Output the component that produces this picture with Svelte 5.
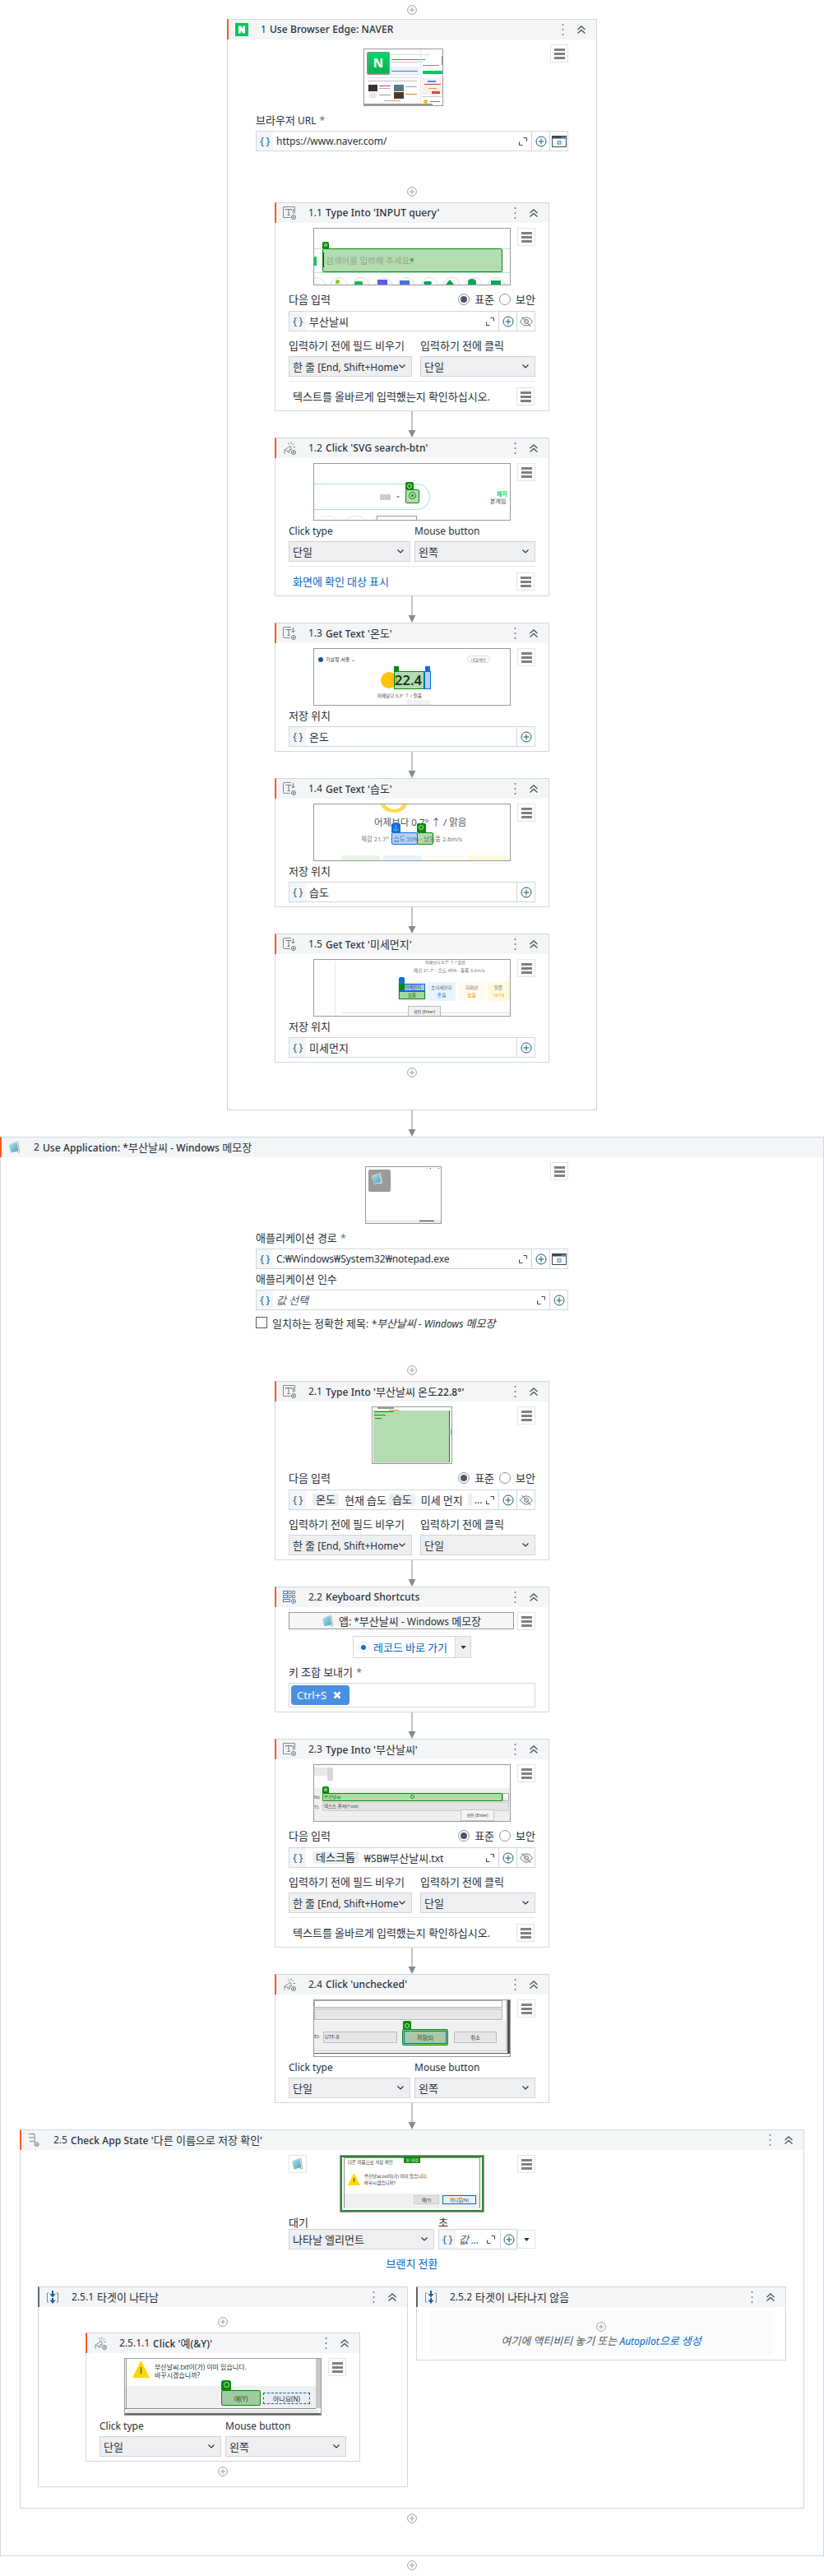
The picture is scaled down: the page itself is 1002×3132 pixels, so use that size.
<script>
  const ks = (t) => t.split(/([\uac00-\ud7a3]+)/).filter(Boolean).map((s) => ({ s, ko: /[\uac00-\ud7a3]/.test(s) }));
  const b = (x, y, w, h, o = {}) => ({ x, y, w, h, ...o });
  const st = (i) =>
    `left:${i.x}px;top:${i.y}px;width:${i.w}px;height:${i.h}px;` +
    (i.c ? `background:${i.c};` : '') +
    (i.b ? `border:${i.b};` : '') +
    (i.r ? `border-radius:${i.r};` : '') +
    (i.f ? `font-size:${i.f}px;line-height:${i.h}px;` : '') +
    (i.k ? `color:${i.k};` : '') +
    (i.wt ? `font-weight:${i.wt};` : '') +
    (i.al ? `text-align:${i.al};` : '') +
    (i.clip ? `clip-path:${i.clip};` : '');
  const G = '#0a8a0a';
  const GF = 'rgba(20,140,20,.32)';
  const BL = '#0a6fe0';
  const BF = 'rgba(20,110,230,.32)';
  const tabG = (x, y, w = 8, h = 8) => [b(x, y, w, h, { c: G, r: '2px 2px 0 0' }), b(x + w / 2 - 2, y + h / 2 - 2, 4, 4, { b: '1px solid #bff0bf', r: '50%' })];
  const lines = (x, y, n, gap, w, col = '#bbb') => Array.from({ length: n }, (_, i) => b(x, y + i * gap, w - (i % 3) * 4, 1, { c: col }));

  const tNaver = [
    ...lines(33, 6, 1, 0, 46, '#bfe8cf'),
    b(33, 12, 41, 1, { c: '#2aa86a' }), b(33, 15, 38, 1, { c: '#ccc' }),
    b(30, 21, 37, 11, { c: '#e9f1fb' }), b(33, 26, 32, 1, { c: '#5c7bb0' }),
    b(3, 3, 28, 28, { c: '#8c8c8c', r: '2px' }),
    b(5, 4, 25, 25, { c: 'linear-gradient(180deg,#03d668,#03b54f)', r: '1px' }),
    b(5, 4, 25, 25, { t: 'N', f: 15, k: '#fff', wt: 800, al: 'center' }),
    b(4, 34, 62, 1, { c: '#ddd' }), b(4, 38, 60, 1, { c: '#bbb' }),
    b(5, 43, 11, 8, { c: '#333' }), b(36, 43, 12, 8, { c: '#5a7785' }), b(36, 52, 12, 8, { c: '#4a3a2a' }), b(6, 52, 9, 7, { c: '#f0e6e6' }),
    b(18, 44, 14, 1, { c: '#e03b6f' }), b(18, 47, 14, 1, { c: '#aaa' }), b(18, 55, 14, 1, { c: '#999' }), b(50, 45, 14, 1, { c: '#999' }), b(50, 54, 14, 1, { c: '#d08a30' }),
    b(24, 62, 20, 1, { c: '#aaa' }),
    b(68, 0, 1, 66, { c: '#e8e8e8' }),
    b(71, 19, 20, 1, { c: '#888' }), b(71, 26, 24, 4, { c: '#03c75a' }),
    b(70, 35, 25, 20, { c: '#fdeef0' }), b(77, 38, 10, 2, { c: '#4a90e2' }), b(73, 42, 20, 1, { c: '#e03b3b' }), b(78, 47, 10, 1, { c: '#e5a100' }), b(82, 51, 10, 3, { c: '#e04444' }),
    b(70, 57, 24, 1, { c: '#ccc' }), b(72, 61, 5, 5, { c: '#ffc107', r: '50%' }), b(80, 63, 12, 1, { c: '#777' }),
    b(0, 66, 83, 2, { c: '#999' }), b(94, 8, 1, 11, { c: '#888' }),
  ];
  const t11 = [
    b(0, 24, 238, 1, { c: '#b5e8cc' }), b(0, 53, 238, 1, { c: '#b5e8cc' }), b(0, 34, 3, 11, { c: '#03c75a' }),
    b(10, 24, 219, 29, { c: '#b3dcb0', b: `1px solid ${G}`, r: '2px' }),
    b(11, 29, 1, 18, { c: '#333' }),
    b(14, 26, 140, 26, { t: '검색어를 입력해 주세요.', f: 10.5, k: '#8dab8b' }),
    b(117, 36, 4, 4, { b: `1px solid ${G}`, r: '50%' }),
    ...tabG(10, 16),
    ...[0, 19, 46, 74, 101, 129, 156, 183, 211].map((x, i) =>
      b(x - (i ? 0 : 8), 59, 22, 22, { b: '1px solid #dcdcdc', r: '50%' })),
    b(26, 62, 5, 5, { c: '#8dce1e', r: '50% 50% 50% 0' }), b(49, 64, 10, 4, { c: '#03b95c', r: '2px 2px 0 0' }), b(77, 62, 12, 6, { c: '#5d5ce6' }), b(104, 63, 12, 5, { c: '#4d73d9' }),
    b(133, 64, 10, 4, { c: '#03a860', r: '3px' }), b(160, 62, 10, 6, { c: '#06a04b', clip: 'polygon(50% 0,100% 100%,0 100%)' }), b(187, 61, 10, 7, { c: '#03a860', r: '50% 50% 0 0' }), b(215, 63, 12, 5, { c: '#03a860' }),
  ];
  const t12 = [
    b(-30, 24, 171, 32, { b: '1px solid #a9e6c6', r: '16px' }),
    b(80, 37, 13, 7, { c: '#ccc' }), b(100, 39, 4, 3, { c: '#999', clip: 'polygon(0 0,100% 0,50% 100%)' }),
    b(111, 22, 10, 9, { c: G, r: '2px 2px 0 0' }), b(113, 24, 6, 6, { b: '1px solid #bff0bf', r: '50%' }),
    b(111, 31, 17, 17, { c: GF, b: `1px solid ${G}`, r: '2px' }),
    b(115, 34, 9, 9, { b: `1px solid ${G}`, r: '50%' }), b(118, 37, 3, 3, { c: G, r: '50%' }),
    b(222, 32, 16, 9, { t: '체지', f: 7, k: '#19ce60', wt: 700 }), b(214, 41, 24, 9, { t: '본게임', f: 7, k: '#444' }),
    b(3, 63, 26, 20, { b: '1px solid #e0efe6', r: '10px' }), b(37, 63, 26, 20, { b: '1px solid #e4e4e4', r: '10px' }), b(70, 63, 26, 20, { b: '1px solid #e4e4e4', r: '10px' }), b(76, 63, 49, 10, { b: '1px solid #999', c: '#fff' }),
  ];
  const t13 = [
    b(5, 10, 6, 6, { c: '#1a4fb0', r: '50%' }),
    b(14, 9, 40, 8, { t: '기상청 서울 ⌄', f: 6, k: '#333' }),
    b(186, 8, 28, 9, { b: '1px solid #ddd', r: '5px', t: '내일예보', f: 5, k: '#666', al: 'center' }),
    b(81, 28, 20, 20, { c: '#fdc30f', r: '50%' }),
    b(97, 27, 37, 22, { c: GF, b: `1px solid ${G}` }),
    b(98, 27, 38, 22, { t: '22.4', f: 16.5, k: '#16341a', wt: 600 }),
    b(134, 27, 8, 22, { c: BF, b: `1px solid ${BL}` }),
    b(97, 21, 6, 6, { c: G }), b(135, 21, 6, 6, { c: BL }),
    b(77, 54, 66, 7, { t: '어제보다 3.3° ↑ / 맑음', f: 5.5, k: '#444' }),
    b(112, 62, 30, 8, { c: '#f2f2f2' }),
  ];
  const t14 = [
    b(80, -18, 34, 28, { c: '#ffd84c', r: '50%' }), b(84, -22, 26, 28, { c: '#fff', r: '50%' }),
    b(73, 13, 130, 17, { t: '어제보다 0.7° ↑ / 맑음', f: 11.5, k: '#555' }),
    b(57, 36, 170, 12, { t: '체감 21.7° · 습도 50% · 남동풍 2.6m/s', f: 7.5, k: '#777' }),
    b(94, 34, 32, 15, { c: BF, b: `1px solid ${BL}`, r: '2px' }),
    b(94, 23, 11, 11, { c: BL, r: '2px 2px 0 0', t: '⚓', f: 7, k: '#fff', al: 'center' }),
    b(125, 34, 20, 15, { c: GF, b: `1px solid ${G}`, r: '2px' }),
    b(125, 23, 11, 11, { c: G, r: '2px 2px 0 0' }), b(127, 25, 6, 6, { b: '1px solid #bff0bf', r: '50%' }),
    b(33, 62, 47, 12, { c: '#e8f6e5', r: '3px' }), b(84, 62, 47, 12, { c: '#e7f4fd', r: '3px' }), b(135, 62, 47, 12, { c: '#fdfaef', r: '3px' }), b(186, 62, 47, 12, { c: '#fefbdc', r: '3px' }),
  ];
  const t15 = [
    b(25, 2, 1, 64, { c: '#e8e8e8' }),
    b(135, 0, 80, 6, { t: '어제보다 0.7° ↑ / 맑음', f: 5, k: '#555' }),
    b(121, 10, 110, 7, { t: '체감 21.7° · 습도 45% · 동풍 3.2m/s', f: 5.6, k: '#777' }),
    b(102, 27, 34, 23, { c: '#e9f6e6', r: '3px' }),
    b(138, 27, 34, 23, { c: '#e8f4fd', r: '3px' }),
    b(138, 30, 34, 8, { t: '초미세먼지', f: 5.5, k: '#667', al: 'center' }), b(138, 39, 34, 8, { t: '좋음', f: 6, k: '#3b8fe0', al: 'center' }),
    b(175, 27, 33, 23, { c: '#fdfaef', r: '3px' }),
    b(175, 30, 33, 8, { t: '자외선', f: 5.5, k: '#667', al: 'center' }), b(175, 39, 33, 8, { t: '높음', f: 6, k: '#f0a020', al: 'center' }),
    b(211, 27, 30, 23, { c: '#fefbdc', r: '3px' }),
    b(211, 30, 26, 8, { t: '일몰', f: 5.5, k: '#667', al: 'center' }), b(211, 39, 26, 8, { t: '19:19', f: 5.5, k: '#f0a020', al: 'center' }),
    b(103, 29, 32, 9, { c: BF, b: `1px solid ${BL}` }),
    b(105, 29, 30, 9, { t: '미세먼지', f: 5.5, k: '#345', al: 'center' }),
    b(103, 38, 32, 10, { c: GF, b: `1px solid ${G}` }),
    b(103, 38, 32, 10, { t: '보통', f: 5.5, k: '#0a6a0a', al: 'center' }),
    b(103, 21, 7, 8, { c: BL, r: '2px 2px 0 0' }), b(103, 29, 7, 8, { c: G }),
    b(33, 64, 205, 1, { c: '#e0e0e0' }),
    b(114, 56, 40, 14, { c: '#f2f2f2', b: '1px solid #bbb' }),
    b(115, 60, 38, 7, { t: '확인 (Enter)', f: 5, k: '#444', al: 'center' }),
  ];
  const t2 = [
    b(3, 3, 27, 27, { c: '#9a9a9a', r: '2px' }),
    b(6, 6, 22, 22, { ic: 'note' }),
    b(0, 64, 91, 4, { c: '#eee' }), b(65, 65, 18, 1, { c: '#333' }),
    b(78, 1, 1, 1, { c: '#333' }), b(88, 1, 1, 1, { c: '#333' }),
  ];
  const t21 = [
    b(1, 1, 90, 3, { c: '#fff' }),
    b(6, 0, 20, 2, { c: '#999' }), b(20, 3, 12, 1, { c: '#e09a3a' }),
    b(1, 4, 93, 63, { c: '#b3dcb0' }),
    b(93, 4, 1, 63, { c: G }), b(95, 26, 2, 8, { c: '#78a8d8' }),
    b(2, 5, 24, 1, { c: '#128a12' }), b(2, 9, 14, 1, { c: '#128a12' }), b(3, 13, 8, 1, { c: '#128a12' }),
    b(0, 67, 93, 1, { c: '#ddd' }),
  ];
  const t23 = [
    b(0, 3, 16, 10, { c: '#e8e8e8' }), b(16, 3, 7, 16, { c: '#d8d8d8' }),
    b(0, 28, 238, 42, { c: '#f0f0f0' }),
    b(0, 34, 10, 10, { t: 'N):', f: 5.5, k: '#444' }), b(0, 46, 10, 10, { t: 'T):', f: 5.5, k: '#444' }),
    b(10, 34, 219, 10, { c: '#aedcaa', b: `1px solid ${G}`, r: '1px' }),
    b(12, 34, 30, 10, { t: '부산날씨', f: 5.5, k: '#185c18' }),
    b(117, 36, 5, 5, { b: `1px solid ${G}`, r: '50%' }),
    b(229, 34, 8, 10, { c: '#fff', b: '1px solid #aaa', t: '⌄', f: 5, k: '#555', al: 'center' }),
    b(10, 45, 227, 11, { c: '#e4e4e4', b: '1px solid #ccc' }),
    b(12, 46, 60, 9, { t: '텍스트 문서(*.txt)', f: 5.5, k: '#444' }),
    b(178, 54, 41, 14, { c: '#f5f5f5', b: '1px solid #c8c8c8' }),
    b(179, 58, 39, 7, { t: '확인 (Enter)', f: 5, k: '#444', al: 'center' }),
    ...tabG(10, 26),
  ];
  const t24 = [
    b(0, 0, 229, 9, { b: '1px solid #aaa', c: '#fff' }),
    b(0, 10, 229, 14, { c: '#e6e6e6', b: '1px solid #b5b5b5' }),
    b(0, 25, 233, 36, { c: '#f0f0f0' }),
    b(0, 39, 10, 10, { t: 'E):', f: 6, k: '#444' }),
    b(11, 38, 90, 14, { c: '#e6e6e6', b: '1px solid #bbb' }),
    b(13, 41, 40, 8, { t: 'UTF-8', f: 6.5, k: '#444' }),
    b(170, 38, 52, 14, { c: '#e6e6e6', b: '1px solid #bbb', t: '취소', f: 6.5, k: '#444', al: 'center' }),
    b(108, 25, 10, 11, { c: G, r: '2px 2px 0 0' }), b(110, 28, 6, 6, { b: '1px solid #bff0bf', r: '50%' }),
    b(107, 35, 56, 20, { c: '#8fd08a', b: `1.5px solid ${G}`, r: '2px' }),
    b(109, 37, 52, 16, { c: '#a8c8a8', b: '1px solid #0a70a0', t: '저장(S)', f: 6.5, k: '#333', al: 'center' }),
    b(233, 0, 2, 62, { c: '#d0d0d0' }), b(235, 0, 3, 65, { c: '#555' }),
    b(0, 61, 235, 1, { c: '#ccc' }), b(0, 64, 238, 1, { c: '#555' }),
  ];
  const t25 = [
    b(0, 0, 174, 68, { b: `2px solid #2c8a2c` }),
    b(4, 2, 166, 62, { c: '#fff', b: '1px solid #888' }),
    b(5, 46, 164, 18, { c: '#f0f0f0' }),
    b(9, 5, 80, 7, { t: '다른 이름으로 저장 확인', f: 5.5, k: '#333' }),
    b(77, 1, 20, 8, { c: G, r: '1px', t: '⊗ 대상', f: 5, k: '#fff', al: 'center' }),
    b(9, 21, 15, 15, { c: '#fcdc00', clip: 'polygon(50% 0,100% 100%,0 100%)' }),
    b(16, 27, 1, 5, { c: '#333' }),
    b(29, 22, 90, 7, { t: '부산날씨.txt이(가) 이미 있습니다.', f: 5.5, k: '#333' }),
    b(29, 30, 60, 7, { t: '바꾸시겠습니까?', f: 5.5, k: '#333' }),
    b(89, 48, 31, 11, { c: '#e1e1e1', b: '1px solid #ccc', t: '예(Y)', f: 5.5, k: '#333', al: 'center' }),
    b(124, 48, 41, 11, { c: '#e8f0f6', b: '1px solid #0a6ab0', t: '아니요(N)', f: 5.5, k: '#333', al: 'center' }),
  ];
  const t2511 = [
    b(0, 33, 232, 27, { c: '#f0f0f0' }),
    b(232, 0, 6, 60, { c: '#c8c8c8' }),
    b(1, 0, 1, 60, { c: '#999' }),
    b(0, 60, 232, 1, { c: '#888' }), b(3, 62, 232, 4, { c: '#e8e8e8' }), b(0, 66, 238, 2, { c: '#666' }),
    b(9, 2, 21, 21, { c: '#fdd800', clip: 'polygon(50% 0,100% 100%,0 100%)' }),
    b(19, 10, 1, 8, { c: '#333' }),
    b(36, 4, 130, 11, { t: '부산날씨.txt이(가) 이미 있습니다.', f: 8, k: '#333' }),
    b(36, 14, 100, 11, { t: '바꾸시겠습니까?', f: 8, k: '#333' }),
    b(117, 26, 12, 12, { c: G, r: '3px 3px 0 0' }), b(120, 28, 7, 7, { b: '1px solid #bff0bf', r: '50%' }),
    b(117, 38, 48, 19, { c: '#a0caa0', b: `1.5px solid ${G}`, r: '2px', t: '예(Y)', f: 8, k: '#2c5c2c', al: 'center' }),
    b(168, 41, 57, 14, { c: '#e8eef4', b: '1px dashed #0a5fc0', t: '아니요(N)', f: 8, k: '#333', al: 'center' }),
  ];
</script>

{#snippet tx(text)}{#each ks(text) as r}<span class:ko={r.ko}>{r.s}</span>{/each}{/snippet}

{#snippet add()}
  <svg class="add" viewBox="0 0 12 12"><circle cx="6" cy="6" r="5.4" fill="#fff" stroke="#9aa0a5" /><path d="M6 3v6M3 6h6" stroke="#9aa0a5" /></svg>
{/snippet}

{#snippet arrow()}
  <svg class="arrow" viewBox="0 0 10 32"><path d="M5 0v24" stroke="#8a8a8a" /><path d="M0.5 23h9L5 32z" fill="#8a8a8a" /></svg>
{/snippet}

{#snippet menu()}
  <div class="menu"><i></i><i></i><i></i></div>
{/snippet}

{#snippet thumb(w, items)}
  <div class="thumb" style="width:{w}px">
    {#each items as i}
      <div class="it" style={st(i)}>
        {#if i.ic === 'note'}{@render icon('note')}{:else if i.t}{@render tx(i.t)}{/if}
      </div>
    {/each}
  </div>
{/snippet}

{#snippet icon(k)}
  {#if k === 'naver'}
    <svg class="ic" viewBox="0 0 16 16"><rect width="16" height="16" fill="#03c75a" /><path d="M4 3.5h3l2.3 3.6V3.5H12v9H9L6.7 8.900v3.600H4z" fill="#fff" /></svg>
  {:else if k === 'type'}
    <svg class="ic" viewBox="0 0 16 16" fill="none" stroke="#7c8a92"><path d="M14.500 8V.5H.5v13h9" /><path d="M3.500 3.500h7M7 3.500v7M5.500 10.500h3M3.500 3.500v1.500M10.500 3.500v1.500" stroke="#69777f" /><path d="M12.500 3v6" stroke="#69777f" /><circle cx="13" cy="13" r="2.500" stroke="#69777f" /><circle cx="13" cy="13" r="1" fill="#69777f" stroke="none" /></svg>
  {:else if k === 'click'}
    <svg class="ic" viewBox="0 0 16 16" fill="none" stroke="#7c8a92"><path d="M1 11l8-6 1.500 4.500-3 .5 1 2.500-2 1-1-2.500z" /><path d="M3 14.500a2 2 0 0 1-1.500-2" /><path d="M10 .5v2.500M13.500 2.500l-2 2M15 6.500h-2.500M6.500 1.500l1 2" /><circle cx="13" cy="13" r="2.500" stroke="#69777f" /><circle cx="13" cy="13" r="1" fill="#69777f" stroke="none" /></svg>
  {:else if k === 'get'}
    <svg class="ic" viewBox="0 0 16 16" fill="none" stroke="#7c8a92"><path d="M10 .5H2a1.500 1.500 0 0 0-1.500 1.500v10a1.500 1.500 0 0 0 1.500 1.500h7" /><path d="M3.500 3.500h7M7 3.500v7M5.500 10.500h3" stroke="#69777f" /><path d="M12.500 1v6M10.500 5l2 2 2-2" stroke="#69777f" /><circle cx="13" cy="13" r="2.500" stroke="#69777f" /><circle cx="13" cy="13" r="1" fill="#69777f" stroke="none" /></svg>
  {:else if k === 'keys'}
    <svg class="ic" viewBox="0 0 16 16" fill="none" stroke="#4a7ab8"><rect x=".5" y=".5" width="5" height="3" /><rect x="7" y=".5" width="3" height="3" stroke="#7c8a92" /><rect x="11.500" y=".5" width="3" height="3" stroke="#7c8a92" /><rect x=".5" y="5.500" width="5" height="3" /><rect x="7" y="5.500" width="3" height="3" stroke="#7c8a92" /><rect x="11.500" y="5.500" width="3" height="3" stroke="#7c8a92" /><rect x=".5" y="10.500" width="8" height="3" /><circle cx="13" cy="13" r="2.500" stroke="#69777f" /><circle cx="13" cy="13" r="1" fill="#69777f" stroke="none" /></svg>
  {:else if k === 'state'}
    <svg class="ic" viewBox="0 0 16 16" fill="none" stroke="#7c8a92"><path d="M1 .5h7v9H2M1 5h7" /><path d="M8 9.500v1" /><circle cx="10.500" cy="13" r="2.500" stroke="#69777f" /><circle cx="10.500" cy="13" r="1" fill="#69777f" stroke="none" /></svg>
  {:else if k === 'target'}
    <svg class="ic" viewBox="0 0 16 16" fill="none"><path d="M3.500 3H1.500v11h2M12.500 3h2v11h-2" stroke="#7c8a92" /><path d="M8 0v5" stroke="#185fa8" stroke-width="2" /><path d="M4.500 4h7L8 8.500z" fill="#185fa8" /><path d="M8 9v3" stroke="#185fa8" stroke-width="2" /><path d="M4.500 11.500h7L8 16z" fill="#185fa8" /></svg>
  {:else if k === 'note'}
    <svg class="ic note" viewBox="0 0 16 16"><defs><linearGradient id="ng" x1="0" y1="0" x2="1" y2="1"><stop offset="0" stop-color="#bfe6ee" /><stop offset="1" stop-color="#3d9fc0" /></linearGradient></defs><path d="M3 3.500l9-3 2.500 13-2.500 1.500z" fill="#c9bfa4" /><path d="M1 5l10-3.500 2 11.500L4 15z" fill="#f5f5f0" /><path d="M1 5l9.500-3.300 1.800 10.600L3.500 14.500z" fill="url(#ng)" /></svg>
  {/if}
{/snippet}

{#snippet head(num, title, k, cls = '')}
  <div class="head {cls}">
    {@render icon(k)}
    <span class="num">{num}</span>
    <span class="title">{@render tx(title)}</span>
    <span class="ctl">
      <svg class="keb" viewBox="0 0 3 14"><path d="M1.500 0v2M1.500 6v2M1.500 12v2" stroke="#6b7882" stroke-width="1.500" /></svg>
      <svg class="chev" viewBox="0 0 10 10" fill="none" stroke="#4c5a63" stroke-width="1.400"><path d="M.5 5L5 1l4.500 4M.5 9.500L5 5.500l4.500 4" /></svg>
    </span>
  </div>
{/snippet}

{#snippet fplus()}
  <svg class="fp" viewBox="0 0 14 14"><circle cx="7" cy="7" r="6" fill="none" stroke="#15596f" /><path d="M7 3.500v7M3.500 7h7" stroke="#15596f" /></svg>
{/snippet}
{#snippet expand()}
  <svg class="ex" viewBox="0 0 10 10" fill="none" stroke="#33434d"><path d="M5.500 .5h4v4M.5 5.500v4h4" /></svg>
{/snippet}
{#snippet browser()}
  <svg class="side-ic" viewBox="0 0 18 14"><rect x=".5" y=".5" width="17" height="13" fill="#fff" stroke="#3d4a52" /><rect x=".5" y=".5" width="17" height="3" fill="#3d4a52" /><path d="M12 2h1M14 2h1M16 2h1" stroke="#fff" /><circle cx="9" cy="8.500" r="3" fill="#5ca8e0" /><path d="M6 8.500h6M9 5.500v6" stroke="#fff" stroke-width=".6" /></svg>
{/snippet}

{#snippet field(value, extra = 'plain')}
  <div class="field">
    <span class="pre">{'{ }'}</span>
    {#if value}<span class="val" class:ph={extra === 'ph'}>{@render tx(value)}</span>{:else}<span class="val"></span>{/if}
    {@render expand()}
    <span class="sec">{@render fplus()}</span>
    {#if extra === 'browser'}<span class="sec">{@render browser()}</span>{/if}
  </div>
{/snippet}

{#snippet store(value)}
  <div class="field">
    <span class="pre">{'{ }'}</span>
    <span class="val">{@render tx(value)}</span>
    <span class="sec">{@render fplus()}</span>
  </div>
{/snippet}

{#snippet eye()}
  <span class="sec eye"><svg viewBox="0 0 16 14" fill="none" stroke="#66737b"><path d="M.5 7C3 3.500 5.500 2 8 2s5 1.500 7.500 5C13 10.500 10.500 12 8 12S3 10.500.5 7z" /><circle cx="8" cy="7" r="2.500" /><path d="M2.500 1l11 12" /></svg></span>
{/snippet}

{#snippet sel(v)}
  <div class="sel"><span class="sv">{@render tx(v)}</span><svg class="cv" viewBox="0 0 8 5" fill="none" stroke="#273139" stroke-width="1.200"><path d="M.5.5L4 4 7.500.5" /></svg></div>
{/snippet}

{#snippet radios(l)}
  <div class="lab rad">
    <span>{@render tx(l)}</span>
    <span class="rs">
      <span class="radio on"></span><span class="rl">{@render tx('표준')}</span>
      <span class="radio"></span><span class="rl">{@render tx('보안')}</span>
    </span>
  </div>
{/snippet}

{#snippet clearRow()}
  <div class="lab two m5"><span>{@render tx('입력하기 전에 필드 비우기')}</span><span class="right-lab">{@render tx('입력하기 전에 클릭')}</span></div>
  <div class="g2">
    {@render sel('한 줄 [End, Shift+Home')}
    {@render sel('단일')}
  </div>
{/snippet}

{#snippet clickRow()}
  <div class="lab two c"><span>Click type</span><span class="right-lab">Mouse button</span></div>
  <div class="g2 c">
    {@render sel('단일')}
    {@render sel('왼쪽')}
  </div>
{/snippet}

{#snippet verify(t, link = false)}
  <div class="div"></div>
  <div class="vrow">
    <span class:lnk={link} class="vt">{@render tx(t)}</span>
    {@render menu()}
  </div>
{/snippet}

{#snippet row(w, items, cls = 'bal')}
  <div class="trow {cls}">
    <div class="tarea">{@render thumb(w, items)}</div>
    {@render menu()}
  </div>
{/snippet}

<div class="page">
  {@render add()}

  <section class="card w450 mt5">
    {@render head('1', 'Use Browser Edge: NAVER', 'naver')}
    <div class="form wide">
      <div class="trow shift">
        <div class="tarea">{@render thumb(97, tNaver)}</div>
        {@render menu()}
      </div>
      <div class="lab m5">{@render tx('브라우저 URL ')}<span class="req">*</span></div>
      {@render field('https://www.naver.com/', 'browser')}
    </div>
    <div class="seq gap43">
      {@render add()}

      <section class="card w334 mt7">
        {@render head('1.1', "Type Into 'INPUT query'", 'type')}
        <div class="form">
          {@render row(240, t11)}
          {@render radios('다음 입력')}
          <div class="field">
            <span class="pre">{'{ }'}</span>
            <span class="val">{@render tx('부산날씨')}</span>
            {@render expand()}
            <span class="sec">{@render fplus()}</span>
            {@render eye()}
          </div>
          {@render clearRow()}
          {@render verify('텍스트를 올바르게 입력했는지 확인하십시오.')}
        </div>
      </section>
      {@render arrow()}

      <section class="card w334">
        {@render head('1.2', "Click 'SVG search-btn'", 'click')}
        <div class="form">
          {@render row(240, t12)}
          {@render clickRow()}
          {@render verify('화면에 확인 대상 표시', true)}
        </div>
      </section>
      {@render arrow()}

      <section class="card w334">
        {@render head('1.3', "Get Text '온도'", 'get')}
        <div class="form">
          {@render row(240, t13)}
          <div class="lab">{@render tx('저장 위치')}</div>
          {@render store('온도')}
        </div>
      </section>
      {@render arrow()}

      <section class="card w334">
        {@render head('1.4', "Get Text '습도'", 'get')}
        <div class="form">
          {@render row(240, t14)}
          <div class="lab">{@render tx('저장 위치')}</div>
          {@render store('습도')}
        </div>
      </section>
      {@render arrow()}

      <section class="card w334">
        {@render head('1.5', "Get Text '미세먼지'", 'get')}
        <div class="form">
          {@render row(240, t15)}
          <div class="lab">{@render tx('저장 위치')}</div>
          {@render store('미세먼지')}
        </div>
      </section>
      <div class="addwrap">{@render add()}</div>
      <div class="h39"></div>
    </div>
  </section>
  {@render arrow()}

  <section class="card wfull">
    <div class="head">
      {@render icon('note')}
      <span class="num n2">2</span>
      <span class="title">{@render tx('Use Application: *부산날씨 - Windows 메모장')}</span>
    </div>
    <div class="form wide">
      <div class="trow shift">
        <div class="tarea">{@render thumb(93, t2)}</div>
        {@render menu()}
      </div>
      <div class="lab m5">{@render tx('애플리케이션 경로 ')}<span class="req">*</span></div>
      {@render field('C:₩Windows₩System32₩notepad.exe', 'browser')}
      <div class="lab">{@render tx('애플리케이션 인수')}</div>
      {@render field('값 선택', 'ph')}
      <div class="chk"><span class="box"></span><span>{@render tx('일치하는 정확한 제목: ')}<em>{@render tx('*부산날씨 - Windows 메모장')}</em></span></div>
    </div>
    <div class="seq gap45">
      {@render add()}

      <section class="card w334 mt7">
        {@render head('2.1', "Type Into '부산날씨 온도22.8°'", 'type')}
        <div class="form">
          {@render row(98, t21)}
          {@render radios('다음 입력')}
          <div class="field">
            <span class="pre">{'{ }'}</span>
            <span class="val chips">
              <b class="chip">{@render tx('온도')}</b>
              <span class="chiptext">{@render tx('현재 습도')}</span>
              <b class="chip">{@render tx('습도')}</b>
              <span class="chiptext">{@render tx('미세 먼지')}</span>
              <b class="chip tiny"></b>
              <span class="dots">...</span>
            </span>
            {@render expand()}
            <span class="sec">{@render fplus()}</span>
            {@render eye()}
          </div>
          {@render clearRow()}
        </div>
      </section>
      {@render arrow()}

      <section class="card w334">
        {@render head('2.2', 'Keyboard Shortcuts', 'keys')}
        <div class="form">
          <div class="approw">
            <div class="appbar">{@render icon('note')}<span>{@render tx('앱: *부산날씨 - Windows 메모장')}</span></div>
            {@render menu()}
          </div>
          <div class="recwrap">
            <div class="rec">
              <span class="recdot"></span>
              <span class="lnk">{@render tx('레코드 바로 가기')}</span>
              <span class="reccaret"><svg viewBox="0 0 8 5"><path d="M0 0h8L4 5z" fill="#273139" /></svg></span>
            </div>
          </div>
          <div class="lab m5">{@render tx('키 조합 보내기 ')}<span class="req">*</span></div>
          <div class="keyf">
            <span class="kchip">Ctrl+S <svg viewBox="0 0 10 10"><path d="M1.500 1.500l7 7M8.500 1.500l-7 7" stroke="#fff" stroke-width="2.600" /></svg></span>
          </div>
        </div>
      </section>
      {@render arrow()}

      <section class="card w334">
        {@render head('2.3', "Type Into '부산날씨'", 'type')}
        <div class="form">
          {@render row(240, t23)}
          {@render radios('다음 입력')}
          <div class="field">
            <span class="pre">{'{ }'}</span>
            <span class="val chips">
              <b class="chip big">{@render tx('데스크톱')}</b>
              <span class="chiptext">{@render tx('₩SB₩부산날씨.txt')}</span>
            </span>
            {@render expand()}
            <span class="sec">{@render fplus()}</span>
            {@render eye()}
          </div>
          {@render clearRow()}
          {@render verify('텍스트를 올바르게 입력했는지 확인하십시오.')}
        </div>
      </section>
      {@render arrow()}

      <section class="card w334">
        {@render head('2.4', "Click 'unchecked'", 'click')}
        <div class="form">
          {@render row(240, t24)}
          {@render clickRow()}
        </div>
      </section>
      {@render arrow()}

      <section class="card w954">
        {@render head('2.5', "Check App State '다른 이름으로 저장 확인'", 'state')}
        <div class="form">
          <div class="trow st">
            <div class="appic">{@render icon('note')}</div>
            <div class="tarea">{@render thumb(176, t25)}</div>
            {@render menu()}
          </div>
          <div class="waitlab"><span>{@render tx('대기')}</span><span>{@render tx('초')}</span></div>
          <div class="waitrow">
            {@render sel('나타날 엘리먼트')}
            <div class="field secs">
              <span class="pre">{'{ }'}</span>
              <span class="val ph">{@render tx('값 ...')}</span>
              {@render expand()}
              <span class="sec">{@render fplus()}</span>
            </div>
            <span class="drop"><svg viewBox="0 0 8 5"><path d="M0 0h8L4 5z" fill="#273139" /></svg></span>
          </div>
          <div class="branch lnk">{@render tx('브랜치 전환')}</div>
        </div>
        <div class="branches">
          <section class="card w450 start">
            {@render head('2.5.1', '타겟이 나타남', 'target', 'dark')}
            <div class="seq gap12">
              {@render add()}
              <section class="card w334 mt7">
                {@render head('2.5.1.1', "Click '예(&Y)'", 'click')}
                <div class="form">
                  {@render row(240, t2511)}
                  {@render clickRow()}
                </div>
              </section>
              <div class="addwrap">{@render add()}</div>
              <div class="h12"></div>
            </div>
          </section>
          <section class="card w450 start">
            {@render head('2.5.2', '타겟이 나타나지 않음', 'target', 'dark')}
            <div class="empty">
              {@render add()}
              <div class="emptyt"><em>{@render tx('여기에 액티비티 놓기 또는 ')}</em><em class="lnk">{@render tx('Autopilot으로 생성')}</em></div>
            </div>
          </section>
        </div>
      </section>
      <div class="addwrap">{@render add()}</div>
      <div class="h40"></div>
    </div>
  </section>
  <div class="addwrap m5top">{@render add()}</div>
</div>

<style>
  :global(body) {
    margin: 0;
    background: #fff;
    font-family: "Noto Sans", "Noto Sans CJK KR", sans-serif;
    font-size: 12px;
    color: #273139;
  }
  .ko { font-size: 13px; }
  .page {
    width: 1002px;
    height: 3132px;
    box-sizing: border-box;
    padding-top: 6px;
    display: flex;
    flex-direction: column;
    align-items: center;
    overflow: hidden;
  }
  .add { width: 12px; height: 12px; display: block; flex: none; }
  .addwrap { margin-top: 6px; height: 12px; }
  .m5top { margin-top: 5px; }
  .arrow { width: 10px; height: 32px; display: block; flex: none; }
  .card {
    box-sizing: border-box;
    border: 1px solid #cfd8dd;
    background: #fff;
    flex: none;
  }
  .w450 { width: 450px; }
  .w334 { width: 334px; }
  .w954 { width: 954px; }
  .wfull { width: 1002px; }
  .mt5 { margin-top: 5px; }
  .mt7 { margin-top: 7px; }
  .start { align-self: flex-start; }
  .head {
    box-sizing: border-box;
    margin: -1px 0 0 -1px;
    height: 25px;
    border-top: 1px solid #cfd8dd;
    border-left: 2px solid #fa5a1e;
    background: #f4f5f7;
    display: flex;
    align-items: center;
    padding-left: 8px;
    line-height: 16px;
    white-space: nowrap;
  }
  .head.dark { border-left-color: #5b6770; }
  .ic { width: 16px; height: 16px; flex: none; display: block; }
  .num { margin-left: 15px; margin-right: 4px; color: #273139; }
  .title { font-weight: 500; color: #273139; letter-spacing: .1px; }
  .title .ko { font-weight: 400; letter-spacing: 0; }
  .ctl { margin-left: auto; display: flex; align-items: center; width: 42px; }
  .keb { width: 3px; height: 14px; margin-left: 0; }
  .chev { width: 10px; height: 10px; margin-left: 16px; }
  .form { width: 300px; margin: 0 auto; padding-bottom: 5px; }
  .form.wide { width: 380px; padding-bottom: 0; }
  .trow { display: flex; margin-top: 6px; align-items: flex-start; }
  .trow.bal { padding-left: 22px; }
  .tarea { flex: 1; display: flex; justify-content: center; min-width: 0; }
  .trow.shift .tarea { margin-top: 5px; }
  .trow.st .appic {
    box-sizing: border-box;
    width: 22px; height: 22px;
    border: 1px solid #dfe5e9;
    display: flex; align-items: center; justify-content: center;
  }
  .thumb {
    position: relative;
    overflow: hidden;
    box-sizing: border-box;
    height: 70px;
    border: 1px solid #9a9a9a;
    background: #fff;
    flex: none;
  }
  .it { position: absolute; box-sizing: border-box; white-space: nowrap; overflow: hidden; }
  .it :global(.ko) { font-size: inherit; }
  .menu {
    box-sizing: border-box;
    width: 22px; height: 22px;
    border: 1px solid #dfe5e9;
    display: flex; flex-direction: column; align-items: center; justify-content: center; gap: 2px;
    flex: none;
    background: #fff;
  }
  .menu i { display: block; width: 13px; height: 3px; background: #808080; }
  .lab { height: 25px; line-height: 25px; white-space: nowrap; }
  .m5 { margin-top: 5px; }
  .req { color: #3b7c9c; margin-left: 1px; }
  .lab.rad { margin-top: 5px; height: 24px; line-height: 24px; margin-bottom: 2px; display: flex; justify-content: space-between; }
  .rs { display: flex; align-items: center; }
  .radio { box-sizing: border-box; width: 14px; height: 14px; border: 1px solid #8a959c; border-radius: 50%; background: #fff; position: relative; }
  .radio.on::after { content: ""; position: absolute; left: 2px; top: 2px; width: 8px; height: 8px; border-radius: 50%; background: #4c5a63; }
  .rl { margin-left: 6px; margin-right: 6px; }
  .rl:last-child { margin-right: 0; }
  .field {
    box-sizing: border-box;
    height: 25px;
    border: 1px solid #cfd8dd;
    display: flex;
    align-items: center;
    background: #fff;
  }
  .pre {
    width: 20px; height: 23px; line-height: 22px; flex: none;
    background: #f4f5f7;
    color: #15698c;
    text-align: center;
    letter-spacing: -.5px;
    font-size: 13px;
  }
  .val { flex: 1; min-width: 0; padding-left: 4px; white-space: nowrap; overflow: hidden; }
  .val.ph { font-style: italic; color: #4c5a63; }
  .ex { width: 10px; height: 10px; flex: none; margin-right: 5px; }
  .sec { width: 22px; height: 23px; flex: none; border-left: 1px solid #cfd8dd; box-sizing: border-box; display: flex; align-items: center; justify-content: center; }
  .fp { width: 14px; height: 14px; display: block; }
  .side-ic { width: 18px; height: 14px; display: block; }
  .eye svg { width: 16px; height: 14px; }
  .g2 { display: grid; grid-template-columns: 150px 140px; gap: 10px; }
  .g2.c { grid-template-columns: 148px 147px; gap: 5px; }
  .lab.two { display: grid; grid-template-columns: 150px 140px; gap: 10px; }
  .lab.two.c { grid-template-columns: 148px 147px; gap: 5px; }
  .sel {
    box-sizing: border-box;
    height: 25px;
    background: #eeeff1;
    border: 1px solid #cfd4d8;
    display: flex; align-items: center;
    padding: 0 5px 0 4px;
    min-width: 0;
  }
  .sv { flex: 1; min-width: 0; white-space: nowrap; margin-right: 3px; }
  .cv { width: 8px; height: 5px; flex: none; margin-right: 2px; }
  .div { margin-top: 5px; border-top: 1px solid #e6e9ec; }
  .vrow { margin-top: 7px; height: 23px; display: flex; align-items: flex-start; justify-content: space-between; padding-right: 1px; }
  .vt { padding-left: 5px; line-height: 22px; }
  .lnk { color: #0067c5; }
  .seq { display: flex; flex-direction: column; align-items: center; }
  .gap43 { margin-top: 43px; }
  .gap45 { margin-top: 45px; }
  .gap12 { margin-top: 12px; }
  .h39 { height: 39px; }
  .h40 { height: 39px; }
  .h12 { height: 12px; }
  .chk { margin-top: 8px; display: flex; align-items: center; gap: 6px; height: 14px; white-space: nowrap; }
  .box { box-sizing: border-box; width: 14px; height: 14px; border: 1px solid #4c5a63; background: #fff; flex: none; }
  em { font-style: italic; }
  .chips { display: flex; align-items: center; padding-left: 8px; overflow: hidden; }
  .chip { font-weight: 400; background: #eceef0; border-radius: 2px; padding: 0 4px; height: 15px; line-height: 15px; flex: none; }
  .chip.big { padding: 0 4px; }
  .chip.tiny { width: 5px; padding: 0; margin-left: 3px; height: 15px; }
  .chiptext { margin: 0 3px 0 7px; flex: none; }
  .dots { margin-left: 3px; }
  .approw { display: flex; gap: 4px; margin-top: 6px; }
  .appbar { box-sizing: border-box; flex: 1; height: 21px; border: 1px solid #9a9a9a; background: #f5f6f7; display: flex; align-items: center; justify-content: center; gap: 5px; }
  .recwrap { display: flex; justify-content: center; margin-top: 7px; }
  .rec { box-sizing: border-box; width: 144px; height: 27px; border: 1px solid #cfd8dd; display: flex; align-items: center; padding-left: 5px; }
  .recdot { box-sizing: border-box; width: 14px; height: 14px; border-radius: 50%; border: 1px solid #dfe5e9; position: relative; margin-right: 5px; }
  .recdot::after { content: ""; position: absolute; left: 3px; top: 3px; width: 6px; height: 6px; background: #0a6fe0; border-radius: 50%; }
  .reccaret { margin-left: auto; width: 18px; height: 25px; background: #eeeff1; border-left: 1px solid #cfd8dd; display: flex; align-items: center; justify-content: center; }
  .reccaret svg, .drop svg { width: 7px; height: 4px; }
  .keyf { box-sizing: border-box; height: 30px; border: 1px solid #cfd8dd; padding: 2px; }
  .kchip { width: 71px; height: 24px; box-sizing: border-box; border-radius: 4px; background: #4a90e2; color: #fff; font-size: 13px; display: flex; align-items: center; padding-left: 7px; gap: 8px; }
  .kchip svg { width: 10px; height: 10px; }
  .waitlab { display: grid; grid-template-columns: 182px auto; height: 20px; line-height: 24px; }
  .waitrow { display: flex; align-items: center; }
  .waitrow .sel { width: 177px; flex: none; margin-right: 5px; }
  .secs { width: 96px; flex: none; }
  .secs .sec { width: 20px; }
  .secs .ex { margin-right: 6px; }
  .drop { box-sizing: border-box; width: 22px; height: 23px; border: 1px solid #dfe5e9; display: flex; align-items: center; justify-content: center; flex: none; }
  .branch { height: 34px; line-height: 34px; text-align: center; }
  .form:has(.branch) { padding-bottom: 0; }
  .branches { display: flex; gap: 10px; margin: 11px 21px 25px; }
  .empty {
    margin: 5px 16px 5px 16px;
    height: 54px;
    background: #fafbfb;
    display: flex; flex-direction: column; align-items: center;
    padding-top: 13px;
    box-sizing: border-box;
  }
  .emptyt { margin-top: 3px; color: #4c5a63; line-height: 16px; white-space: nowrap; }
</style>
